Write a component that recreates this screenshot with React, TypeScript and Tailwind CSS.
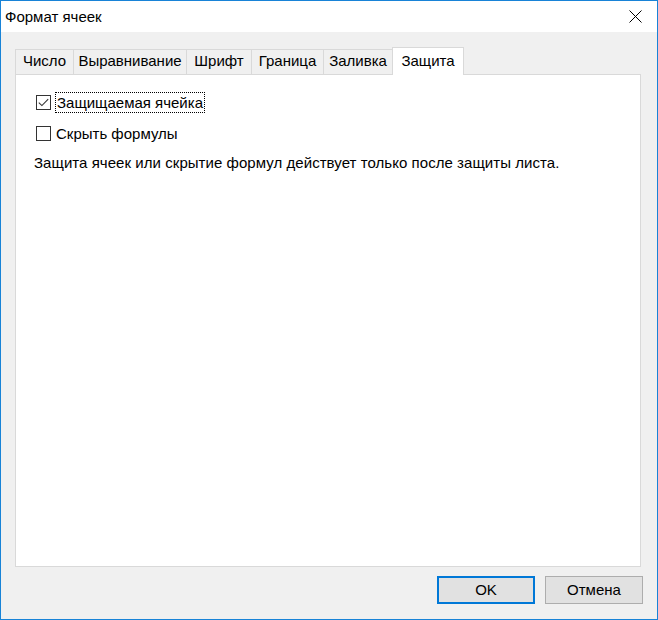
import { useState } from 'react';

const tabs = [
    { label: 'Число', width: 'w-[59px]' },
    { label: 'Выравнивание', width: 'w-[114px]' },
    { label: 'Шрифт', width: 'w-[66px]' },
    { label: 'Граница', width: 'w-[73px]' },
    { label: 'Заливка', width: 'w-[70px]' },
];

function CheckBox({ checked, label, focused }: { checked: boolean; label: string; focused?: boolean }) {
    return (
        <label className="flex items-center h-[22px] cursor-default">
            <span className="w-[15px] h-[15px] border border-[#333333] bg-white flex items-center justify-center shrink-0">
                {checked && (
                    <svg width="11" height="9" viewBox="0 0 11 9" fill="none">
                        <path d="M0.8 4.6 L3.9 7.6 L10.2 1.2" stroke="#333333" strokeWidth="1.1" />
                    </svg>
                )}
            </span>
            <span
                className={
                    focused
                        ? 'ml-[4px] px-[1px] h-[21px] leading-[19px] border border-dotted border-black'
                        : 'ml-[5px] leading-[19px]'
                }>
                {label}
            </span>
        </label>
    );
}

export default function App() {
    const [protectedCell] = useState(true);

    return (
        <div
            className="w-[658px] h-[620px] border border-[#1883d7] bg-[#f0f0f0] flex flex-col text-[15px] text-black"
            style={{ fontFamily: '"Liberation Sans", Arial, sans-serif' }}>
            {/* Title bar */}
            <div className="h-[31px] bg-white flex items-center justify-between shrink-0">
                <span className="pl-[4px] pt-[1px]">Формат ячеек</span>
                <div className="w-[46px] h-[31px] flex items-center justify-center mr-[-1px]">
                    <svg width="13" height="13" viewBox="0 0 13 13">
                        <path d="M0.5 0.5 L12.5 12.5 M12.5 0.5 L0.5 12.5" stroke="#000" strokeWidth="1" />
                    </svg>
                </div>
            </div>

            {/* Tabs */}
            <div className="pl-[14px] pt-[14px] flex items-end h-[42px] shrink-0">
                {tabs.map((tab, i) => (
                    <div
                        key={tab.label}
                        className={`${tab.width} h-[25px] border border-[#d9d9d9] ${i > 0 ? 'ml-[-1px]' : ''} border-b-0 flex items-center justify-center pb-[1px]`}>
                        {tab.label}
                    </div>
                ))}
                <div className="w-[72px] h-[28px] ml-[-1px] mb-[-1px] relative z-10 bg-white border border-[#d9d9d9] border-b-0 flex items-start justify-center pt-[2px]">
                    Защита
                </div>
            </div>

            {/* Pane */}
            <div className="ml-[14px] w-[626px] h-[493px] bg-white border border-[#d9d9d9] shrink-0 pl-[20px] pt-[16px]">
                <CheckBox checked={protectedCell} label="Защищаемая ячейка" focused />
                <div className="mt-[9px]">
                    <CheckBox checked={false} label="Скрыть формулы" />
                </div>
                <p className="mt-[8px] ml-[-2px] tracking-[0.05px]">
                    Защита ячеек или скрытие формул действует только после защиты листа.
                </p>
            </div>

            {/* Buttons */}
            <div className="flex justify-end gap-[10px] pr-[14px] pt-[9px]">
                <button className="w-[98px] h-[28px] bg-[#e1e1e1] border-2 border-[#0078d7]">OK</button>
                <button className="w-[98px] h-[28px] bg-[#e1e1e1] border border-[#adadad]">Отмена</button>
            </div>
        </div>
    );
}
